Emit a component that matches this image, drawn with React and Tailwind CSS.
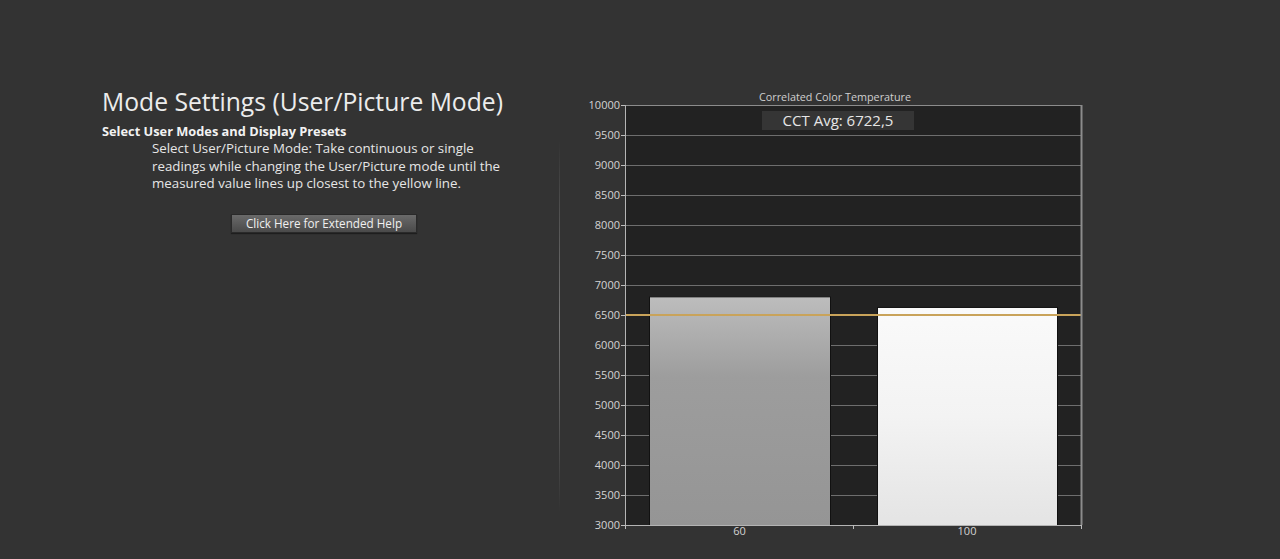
import React from "react";

const TICKS = [10000, 9500, 9000, 8500, 8000, 7500, 7000, 6500, 6000, 5500, 5000, 4500, 4000, 3500, 3000];

// plot coords inside the svg
const PL = 55;
const PR = 511;
const PT = 17;
const PB = 437;
const yOf = (v) => PT + ((10000 - v) / 500) * 30;

const BARS = [
  { label: "60", x: 79, w: 181, value: 6811, fill: "url(#barGray)" },
  { label: "100", x: 307, w: 180, value: 6634, fill: "url(#barWhite)" },
];

function CctChart() {
  return (
    <svg width="530" height="460" className="block" style={{ fontFamily: '"Open Sans", "Noto Sans", sans-serif' }}>
      <defs>
        <linearGradient id="barGray" x1="0" y1="0" x2="0" y2="1">
          <stop offset="0" stopColor="#bdbdbd" />
          <stop offset="0.35" stopColor="#9d9d9d" />
          <stop offset="1" stopColor="#959595" />
        </linearGradient>
        <linearGradient id="barWhite" x1="0" y1="0" x2="0" y2="1">
          <stop offset="0" stopColor="#fafafa" />
          <stop offset="0.5" stopColor="#f3f3f3" />
          <stop offset="1" stopColor="#e4e4e4" />
        </linearGradient>
      </defs>

      <text x="265" y="13" textAnchor="middle" fontSize="10.8" fill="#cfcfcf">
        Correlated Color Temperature
      </text>

      {/* plot background */}
      <rect x={PL} y={PT} width={PR - PL} height={PB - PT} fill="#222222" />

      {/* grid */}
      {TICKS.map((t) => (
        <g key={t}>
          <line x1={PL} x2={PR} y1={yOf(t) + 0.5} y2={yOf(t) + 0.5} stroke="#6e6e6e" strokeWidth="1" />
          <line x1={PL - 4} x2={PL} y1={yOf(t) + 0.5} y2={yOf(t) + 0.5} stroke="#bdbdbd" strokeWidth="1" />
          <text x={PL - 5} y={yOf(t) + 4} textAnchor="end" fontSize="11" fill="#d4d4d4">
            {t}
          </text>
        </g>
      ))}

      {/* bars */}
      {BARS.map((b) => (
        <g key={b.label}>
          <rect
            x={b.x + 0.5}
            y={yOf(b.value) + 0.5}
            width={b.w}
            height={PB - yOf(b.value)}
            fill={b.fill}
            stroke="#111"
            strokeWidth="1"
          />
          <text x={b.x + b.w / 2} y="447" textAnchor="middle" fontSize="11" fill="#d4d4d4">
            {b.label}
          </text>
        </g>
      ))}

      {/* target line */}
      <line x1={PL} x2={PR} y1={yOf(6500)} y2={yOf(6500)} stroke="#c9a35a" strokeWidth="2" />

      {/* borders / axes */}
      <line x1={PL} x2={PR} y1={PT + 0.5} y2={PT + 0.5} stroke="#8c8c8c" strokeWidth="1" />
      <line x1={PR + 0.5} x2={PR + 0.5} y1={PT} y2={PB} stroke="#8c8c8c" strokeWidth="2" />
      <line x1={PL + 0.5} x2={PL + 0.5} y1={PT} y2={PB + 1} stroke="#b4b4b4" strokeWidth="1" />
      <line x1={PL} x2={PR + 1} y1={PB + 0.5} y2={PB + 0.5} stroke="#b4b4b4" strokeWidth="1" />
      {[PL, 283, PR].map((x) => (
        <line key={x} x1={x + 0.5} x2={x + 0.5} y1={PB} y2={PB + 4} stroke="#bdbdbd" strokeWidth="1" />
      ))}

      {/* average box */}
      <rect x="192" y="23" width="152" height="19" fill="#353535" />
      <text x="268" y="38" textAnchor="middle" fontSize="15" fill="#e6e6e6">
        CCT Avg: 6722,5
      </text>
    </svg>
  );
}

export default function App() {
  return (
    <div className="w-full h-[559px] bg-[#333333] overflow-hidden font-['Open_Sans','Noto_Sans',sans-serif]">
      <div className="flex pt-[86px] pl-[102px]">
        <div className="w-[457px] shrink-0">
          <h1 className="text-[24.7px] leading-[32px] text-[#ececec] whitespace-nowrap">
            Mode Settings (User/Picture Mode)
          </h1>
          <div className="mt-[5px] text-[12.8px] leading-[17px] font-bold text-[#f2f2f2]">
            Select User Modes and Display Presets
          </div>
          <p className="ml-[50px] w-[356px] text-[13.3px] leading-[17.5px] text-[#e6e6e6]">
            Select User/Picture Mode: Take continuous or single readings while changing the User/Picture mode until the measured value lines up closest to the yellow line.
          </p>
          <div className="mt-[17px] ml-[129px]">
            <button className="w-[186px] h-[19px] bg-gradient-to-b from-[#6a6a6a] to-[#4a4a4a] border border-[#2a2a2a] text-[11.7px] leading-[17px] text-[#f0f0f0] shadow-[0_1px_1px_rgba(0,0,0,0.4)]">
              Click Here for Extended Help
            </button>
          </div>
        </div>
        <div className="w-px h-[370px] mt-[55px] bg-gradient-to-b from-transparent via-[#7a7a7a] to-transparent shrink-0" />
        <div className="ml-[10px] mt-[2px]">
          <CctChart />
        </div>
      </div>
    </div>
  );
}
